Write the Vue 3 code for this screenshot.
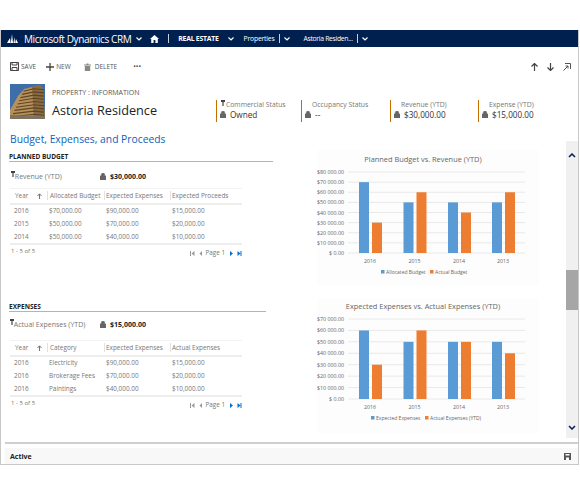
<template>
  <div class="frame">
    <nav class="topbar">
      <svg class="logo" width="11" height="9" viewBox="0 0 11 9"><path d="M0 9 3 4l.6 5zM3.800 9 5 0l1 9zM6.400 9 7.400 3 8 9zM8.200 9 9 5l2 4z" fill="#fff" /></svg>
      <span class="brand">Microsoft Dynamics CRM</span>
      <svg class="chev first" width="6" height="4" viewBox="0 0 6 4"><path d="M.5.5 3 3 5.500.5" /></svg>
      <svg class="home" width="9" height="8" viewBox="0 0 9 8"><path d="M4.500 0 9 4H7.800v4H5.400V5H3.600v3H1.200V4H0z" fill="#fff" /></svg>
      <i class="sep first-sep"></i>
      <b class="area">REAL ESTATE</b>
      <svg class="chev area-chev" width="6" height="4" viewBox="0 0 6 4"><path d="M.5.5 3 3 5.500.5" /></svg>
      <span class="crumb props">Properties</span>
      <i class="sep small"></i>
      <svg class="chev" width="6" height="4" viewBox="0 0 6 4"><path d="M.5.5 3 3 5.500.5" /></svg>
      <span class="crumb record">Astoria Residen...</span>
      <i class="sep small"></i>
      <svg class="chev" width="6" height="4" viewBox="0 0 6 4"><path d="M.5.5 3 3 5.500.5" /></svg>
    </nav>

    <div class="toolbar">
      <button class="cmd save">
        <svg width="9" height="9" viewBox="0 0 9 9"><path d="M.5.500h8v8h-8zM2 .5v2.500h5V.5M2 8.500V5.500h5v3" fill="none" stroke="#444" /></svg>
        SAVE
      </button>
      <button class="cmd new">
        <svg width="8" height="8" viewBox="0 0 8 8"><path d="M4 0v8M0 4h8" stroke="#444" stroke-width="1.300" /></svg>
        NEW
      </button>
      <button class="cmd del">
        <svg width="7" height="8" viewBox="0 0 7 8"><path d="M0 1.500h7v1H0zM2.500.5h2v1h-2zM.8 3h5.400v5H.8z" fill="#888" /></svg>
        DELETE
      </button>
      <span class="more">•••</span>
      <span class="spacer"></span>
      <div class="nav-icons">
        <svg width="7" height="8" viewBox="0 0 7 8"><path d="M3.500 8V1M.5 3.500l3-3 3 3" fill="none" stroke="#444" stroke-width="1.200" /></svg>
        <svg width="7" height="8" viewBox="0 0 7 8"><path d="M3.500 0v7M.5 4.500l3 3 3-3" fill="none" stroke="#444" stroke-width="1.200" /></svg>
        <svg width="8" height="8" viewBox="0 0 8 8"><path d="M2 .5h5.500V6M.5 7.500 5 3M2.500 3H5v2.500" fill="none" stroke="#555" /></svg>
      </div>
    </div>

    <header class="record-head">
      <svg class="photo" width="35" height="35" viewBox="0 0 35 35">
        <rect width="35" height="35" fill="#3d6ea8" />
        <path d="M0 35V26L8 12 14 5 30 1l3 5 2 29z" fill="#b8915a" />
        <path d="M22 3l8-2 3 5 2 29H24z" fill="#8a6a3e" />
        <path v-for="n in 9" :key="n" :d="floorLine(n)" stroke="#5d4526" stroke-width="1.100" fill="none" />
        <path d="M0 31l35 1v3H0z" fill="#7d7360" />
      </svg>
      <div class="head-title">
        <div class="entity">PROPERTY : INFORMATION</div>
        <h1>Astoria Residence</h1>
      </div>
      <div class="stats">
        <div v-for="s in stats" :key="s.label" class="stat">
          <div class="stat-label">
            <svg v-if="s.req" class="key" width="4" height="6" viewBox="0 0 4 6"><path d="M0 0h4v2H2.600v4H1.400V2H0z" fill="#444" /></svg>
            <span>{{ s.label }}</span>
          </div>
          <div class="stat-value">
            <svg width="6" height="7" viewBox="0 0 6 7"><path d="M0 3h6v4H0zM1.300 3V1.800a1.700 1.700 0 0 1 3.400 0V3" fill="#666" stroke="#666" stroke-width=".6" /></svg>
            {{ s.value }}
          </div>
        </div>
      </div>
    </header>

    <div class="body">
      <div class="main">
        <h2 class="page-title">Budget, Expenses, and Proceeds</h2>
        <div class="columns">
          <div class="forms">
            <section v-for="sec in sections" :key="sec.title" class="section" :class="sec.cls">
              <h3>{{ sec.title }}</h3>
              <div class="kpi">
                <span class="kpi-label">
                  <svg class="kpi-key" width="4" height="6" viewBox="0 0 4 6"><path d="M0 0h4v2H2.600v4H1.400V2H0z" fill="#444" /></svg>
                  {{ sec.kpi }}
                </span>
                <svg class="kpi-lock" width="6" height="7" viewBox="0 0 6 7"><path d="M0 3h6v4H0zM1.300 3V1.800a1.700 1.700 0 0 1 3.400 0V3" fill="#666" stroke="#666" stroke-width=".6" /></svg>
                <b>{{ sec.amount }}</b>
              </div>
              <table>
                <thead>
                  <tr>
                    <th class="c1">Year <svg class="sort" width="5" height="6" viewBox="0 0 5 6"><path d="M2.500 6V1M.4 3 2.500.8 4.600 3" fill="none" stroke="#666" stroke-width=".9" /></svg></th>
                    <th v-for="h in sec.head" :key="h">{{ h }}</th>
                  </tr>
                </thead>
                <tbody>
                  <tr v-for="(r, i) in sec.rows" :key="i">
                    <td v-for="(c, j) in r" :key="j">{{ c }}</td>
                  </tr>
                </tbody>
              </table>
              <div class="grid-foot">
                <span>1 - 5 of 5</span>
                <span class="pager">
                  <svg width="16" height="5" viewBox="0 0 16 5"><path d="M0 0h1v5H0zM1.500 2.500 4.500 0v5zM9.500 2.500 12 0v5z" fill="#999" /></svg>
                  <span class="page-no">Page 1</span>
                  <svg width="12" height="5" viewBox="0 0 12 5"><path d="M0 0l3 2.500L0 5zM7.500 0l3 2.500-3 2.500zM10.500 0h1v5h-1z" fill="#0a6fc8" /></svg>
                </span>
              </div>
            </section>
          </div>

          <div class="charts">
            <svg v-for="c in charts" :key="c.title" class="chart" width="222" height="135" viewBox="0 0 222 135">
              <rect width="222" height="135" fill="#fdfdfd" />
              <text x="106" :y="c.titleY" text-anchor="middle" class="c-title">{{ c.title }}</text>
              <g v-for="t in c.ticks" :key="t.label">
                <line x1="31" x2="208" :y1="t.y" :y2="t.y" stroke="#e9e9e9" />
                <text x="27" :y="t.y + 2" text-anchor="end" class="c-small">{{ t.label }}</text>
              </g>
              <g v-for="(g, i) in c.groups" :key="i">
                <rect :x="g.x" :y="g.by" width="10" :height="g.bh" fill="#5b9bd5" />
                <rect :x="g.x + 13" :y="g.oy" width="10" :height="g.oh" fill="#ed7d31" />
                <text :x="g.x + 11" :y="c.base + 10" text-anchor="middle" class="c-small">{{ g.year }}</text>
              </g>
              <rect :x="c.leg1" :y="c.base + 17" width="3.500" height="3.500" fill="#5b9bd5" />
              <text :x="c.leg1 + 5" :y="c.base + 21" class="c-legend">{{ c.names[0] }}</text>
              <rect :x="c.leg2" :y="c.base + 17" width="3.500" height="3.500" fill="#ed7d31" />
              <text :x="c.leg2 + 5" :y="c.base + 21" class="c-legend">{{ c.names[1] }}</text>
            </svg>
          </div>
        </div>
      </div>
      <div class="scrollbar">
        <svg width="8" height="5" viewBox="0 0 8 5"><path d="M1 4l3-3 3 3" fill="none" stroke="#002050" stroke-width="1.500" /></svg>
        <div class="thumb"></div>
        <svg width="8" height="5" viewBox="0 0 8 5"><path d="M1 1l3 3 3-3" fill="none" stroke="#002050" stroke-width="1.500" /></svg>
      </div>
    </div>

    <footer class="status">
      <b>Active</b>
      <svg width="7" height="7" viewBox="0 0 7 7"><path d="M0 0h7v7H0z" fill="#555" /><path d="M1.500 1h4v1.500h-4zM2 4.500h3V7H2z" fill="#fff" /></svg>
    </footer>
  </div>
</template>

<script setup>
const stats = [
  { label: 'Commercial Status', value: 'Owned', req: true },
  { label: 'Occupancy Status', value: '--' },
  { label: 'Revenue (YTD)', value: '$30,000.00' },
  { label: 'Expense (YTD)', value: '$15,000.00' },
]

const sections = [
  {
    title: 'PLANNED BUDGET',
    cls: 'planned',
    kpi: 'Revenue (YTD)',
    amount: '$30,000.00',
    head: ['Allocated Budget', 'Expected Expenses', 'Expected Proceeds'],
    rows: [
      ['2016', '$70,000.00', '$90,000.00', '$15,000.00'],
      ['2015', '$50,000.00', '$70,000.00', '$20,000.00'],
      ['2014', '$50,000.00', '$40,000.00', '$10,000.00'],
    ],
  },
  {
    title: 'EXPENSES',
    cls: 'expenses',
    kpi: 'Actual Expenses (YTD)',
    amount: '$15,000.00',
    head: ['Category', 'Expected Expenses', 'Actual Expenses'],
    rows: [
      ['2016', 'Electricity', '$90,000.00', '$15,000.00'],
      ['2016', 'Brokerage Fees', '$70,000.00', '$20,000.00'],
      ['2016', 'Paintings', '$40,000.00', '$10,000.00'],
    ],
  },
]

// floors of the building in the record photo, leaning with the perspective
function floorLine(n) {
  const y = n * 3.200
  const left = Math.max(1, 15 - n * 1.500)
  return `M${left} ${y + 4}L24 ${y + 1.500}L34 ${y + 2.500}`
}

const years = ['2016', '2015', '2014', '2013']
const groupX = [42, 86.500, 131, 175]

function makeChart(title, titleY, top, base, max, blue, orange, names, leg1, leg2) {
  const step = (base - top) / max
  const ticks = []
  for (let v = max; v >= 0; v--) {
    ticks.push({ y: base - v * step, label: v ? `$${v}0 000.00` : '$ 0.00' })
  }
  const groups = years.map((year, i) => ({
    year,
    x: groupX[i],
    by: base - blue[i] * step,
    bh: blue[i] * step,
    oy: base - orange[i] * step,
    oh: orange[i] * step,
  }))
  return { title, titleY, ticks, groups, base, names, leg1, leg2 }
}

const charts = [
  makeChart('Planned Budget vs. Revenue (YTD)', 12, 22, 103, 8, [7, 5, 5, 5], [3, 6, 4, 6], ['Allocated Budget', 'Actual Budget'], 64, 113),
  makeChart('Expected Expenses vs. Actual Expenses (YTD)', 11, 21, 101, 7, [6, 5, 5, 5], [3, 6, 5, 4], ['Expected Expenses', 'Actual Expenses (YTD)'], 54, 108),
]
</script>

<style>
html,
body {
  margin: 0;
  background: #fff;
}
</style>

<style scoped>
* {
  box-sizing: border-box;
}

.frame {
  width: 579px;
  height: 435px;
  margin-top: 30px;
  display: flex;
  flex-direction: column;
  border-left: 1px solid #c8c8c8;
  border-right: 1px solid #c8c8c8;
  border-bottom: 1px solid #c8c8c8;
  font-family: "Open Sans", "Liberation Sans", sans-serif;
  color: #444;
}

.topbar {
  height: 17px;
  flex: none;
  display: flex;
  align-items: center;
  background: #002050;
  color: #fff;
  padding-left: 6px;
}

.brand {
  margin-left: 6px;
  font-size: 10px;
  letter-spacing: -0.4px;
  white-space: nowrap;
}

.chev {
  fill: none;
  stroke: #fff;
  stroke-width: 1.200;
  margin-left: 4px;
  flex: none;
}

.chev.first {
  margin-left: 5px;
}

.home {
  margin-left: 8px;
}

.sep {
  width: 1px;
  height: 9px;
  background: #c8d0e0;
  margin-left: 9px;
}

.sep.small {
  margin-left: 4px;
}

.area {
  margin-left: 9px;
  font-size: 6.800px;
  letter-spacing: -0.2px;
  white-space: nowrap;
}

.area-chev {
  margin-left: 9px;
}

.crumb {
  font-size: 6.800px;
  white-space: nowrap;
  letter-spacing: -0.2px;
}

.props {
  margin-left: 10px;
}

.record {
  margin-left: 14px;
  letter-spacing: -0.3px;
}

.toolbar {
  height: 37px;
  flex: none;
  display: flex;
  align-items: center;
  padding: 2px 2px 0 9px;
}

.cmd {
  border: 0;
  background: none;
  padding: 0;
  display: flex;
  align-items: center;
  gap: 2px;
  font: 6.500px "Open Sans", sans-serif;
  color: #555;
}

.new {
  margin-left: 10px;
}

.del {
  margin-left: 13px;
  gap: 4px;
}

.more {
  margin-left: 16px;
  font-size: 7px;
  color: #444;
}

.spacer {
  flex: 1;
}

.nav-icons {
  display: flex;
  gap: 9px;
  margin-right: 5px;
}

.record-head {
  height: 35px;
  flex: none;
  display: flex;
  padding-left: 9px;
}

.photo {
  flex: none;
}

.head-title {
  margin-left: 7px;
  width: 164px;
  padding-top: 4px;
}

.entity {
  font-size: 7px;
  line-height: 10px;
  color: #555;
  white-space: nowrap;
}

h1 {
  margin: 4px 0 0;
  font-size: 12.700px;
  line-height: 17px;
  font-weight: 400;
  color: #222;
  white-space: nowrap;
}

.stats {
  display: flex;
  padding-top: 16px;
}

.stat {
  width: 85px;
  height: 22px;
  border-left: 1.500px solid #c46e00;
  padding-left: 3px;
}

.stat:nth-child(2) {
  width: 89px;
}

.stat:nth-child(3) {
  width: 88px;
}

.stat-label {
  font-size: 6.800px;
  line-height: 9px;
  color: #777;
  padding-left: 7px;
  white-space: nowrap;
  position: relative;
}

.stat:first-child .stat-label {
  padding-left: 6px;
}

.key {
  position: absolute;
  left: 1px;
  top: 0;
}

.stat-value {
  display: flex;
  align-items: center;
  gap: 4px;
  font-size: 8.200px;
  line-height: 11px;
  color: #333;
  white-space: nowrap;
}

.body {
  flex: 1;
  min-height: 0;
  display: flex;
}

.main {
  flex: 1;
  min-width: 0;
  padding-top: 13px;
}

.page-title {
  margin: 0 0 0 9px;
  font-size: 10.300px;
  line-height: 14px;
  font-weight: 400;
  color: #1160b7;
  white-space: nowrap;
}

.columns {
  display: flex;
}

.forms {
  width: 316px;
  padding: 4px 0 0 8px;
}

.section {
  width: 264px;
}

.planned {
  height: 150px;
}

.expenses {
  width: 257px;
}

h3 {
  margin: 0;
  height: 12px;
  font-size: 6.500px;
  line-height: 13px;
  font-weight: 700;
  color: #222;
  border-bottom: 1px solid #b4b4b4;
}

.kpi {
  display: flex;
  align-items: center;
  height: 18px;
  margin-top: 5px;
  font-size: 7px;
  color: #777;
}

.expenses .kpi {
  margin-top: 3px;
}

.kpi-label {
  width: 91px;
  padding-left: 2px;
  white-space: nowrap;
}

.expenses .kpi-label {
  padding-left: 1px;
}

.kpi-key {
  margin-right: -2px;
  vertical-align: 2px;
}

.kpi b {
  margin-left: 4px;
  color: #222;
  font-size: 7px;
}

table {
  width: 232px;
  margin: 3px 0 0 1px;
  border-collapse: collapse;
  table-layout: fixed;
  font-size: 6.400px;
  color: #777;
  border-bottom: 2px solid #eee;
}

.expenses table {
  margin-top: 7px;
}

th {
  height: 15px;
  font-weight: 400;
  text-align: left;
  white-space: nowrap;
  padding: 0 0 0 2px;
  border-top: 1px solid #f2f2f2;
  border-bottom: 2px solid #eee;
}

th + th {
  background: linear-gradient(#e2e2e2, #e2e2e2) left center / 1px 9px no-repeat;
}

th.c1 {
  width: 37px;
  padding-left: 5px;
}

th:nth-child(2) {
  width: 57px;
  padding-left: 3px;
}

th:nth-child(3) {
  width: 66px;
}

.sort {
  margin-left: 7px;
  vertical-align: -1px;
}

td {
  height: 13.500px;
  padding: 0 0 0 2px;
  white-space: nowrap;
}

td:first-child {
  padding-left: 4px;
}

.grid-foot {
  width: 232px;
  margin-left: 1px;
  display: flex;
  justify-content: space-between;
  font-size: 6px;
  line-height: 10px;
  color: #777;
  padding: 1px 0 0 1px;
}

.pager {
  display: flex;
  align-items: center;
  white-space: nowrap;
  padding-top: 2px;
  height: 12px;
}

.page-no {
  margin-right: 5px;
  font-size: 6.300px;
}

.charts {
  width: 222px;
  margin-top: 4px;
  display: flex;
  flex-direction: column;
  gap: 13px;
}

.chart {
  display: block;
  font-family: "Open Sans", sans-serif;
}

.c-title {
  font-size: 7.400px;
  fill: #666;
}

.c-small {
  font-size: 5.300px;
  fill: #666;
}

.c-legend {
  font-size: 5px;
  fill: #666;
}

.scrollbar {
  width: 12px;
  margin: 22px 0 4px auto;
  background: #f0f0f0;
  display: flex;
  flex-direction: column;
  align-items: center;
  padding: 12px 0 8px;
}

.thumb {
  width: 100%;
  height: 40px;
  margin-top: 112px;
  margin-bottom: auto;
  background: #a6a6a6;
}

.status {
  height: 22px;
  flex: none;
  margin-left: 4px;
  border-top: 2px solid #cfcfcf;
  display: flex;
  justify-content: space-between;
  align-items: center;
  font-size: 7px;
  color: #222;
  padding: 4px 7px 0 5px;
  background: linear-gradient(#fff 4px, #f8f8f8 4px);
}
</style>
